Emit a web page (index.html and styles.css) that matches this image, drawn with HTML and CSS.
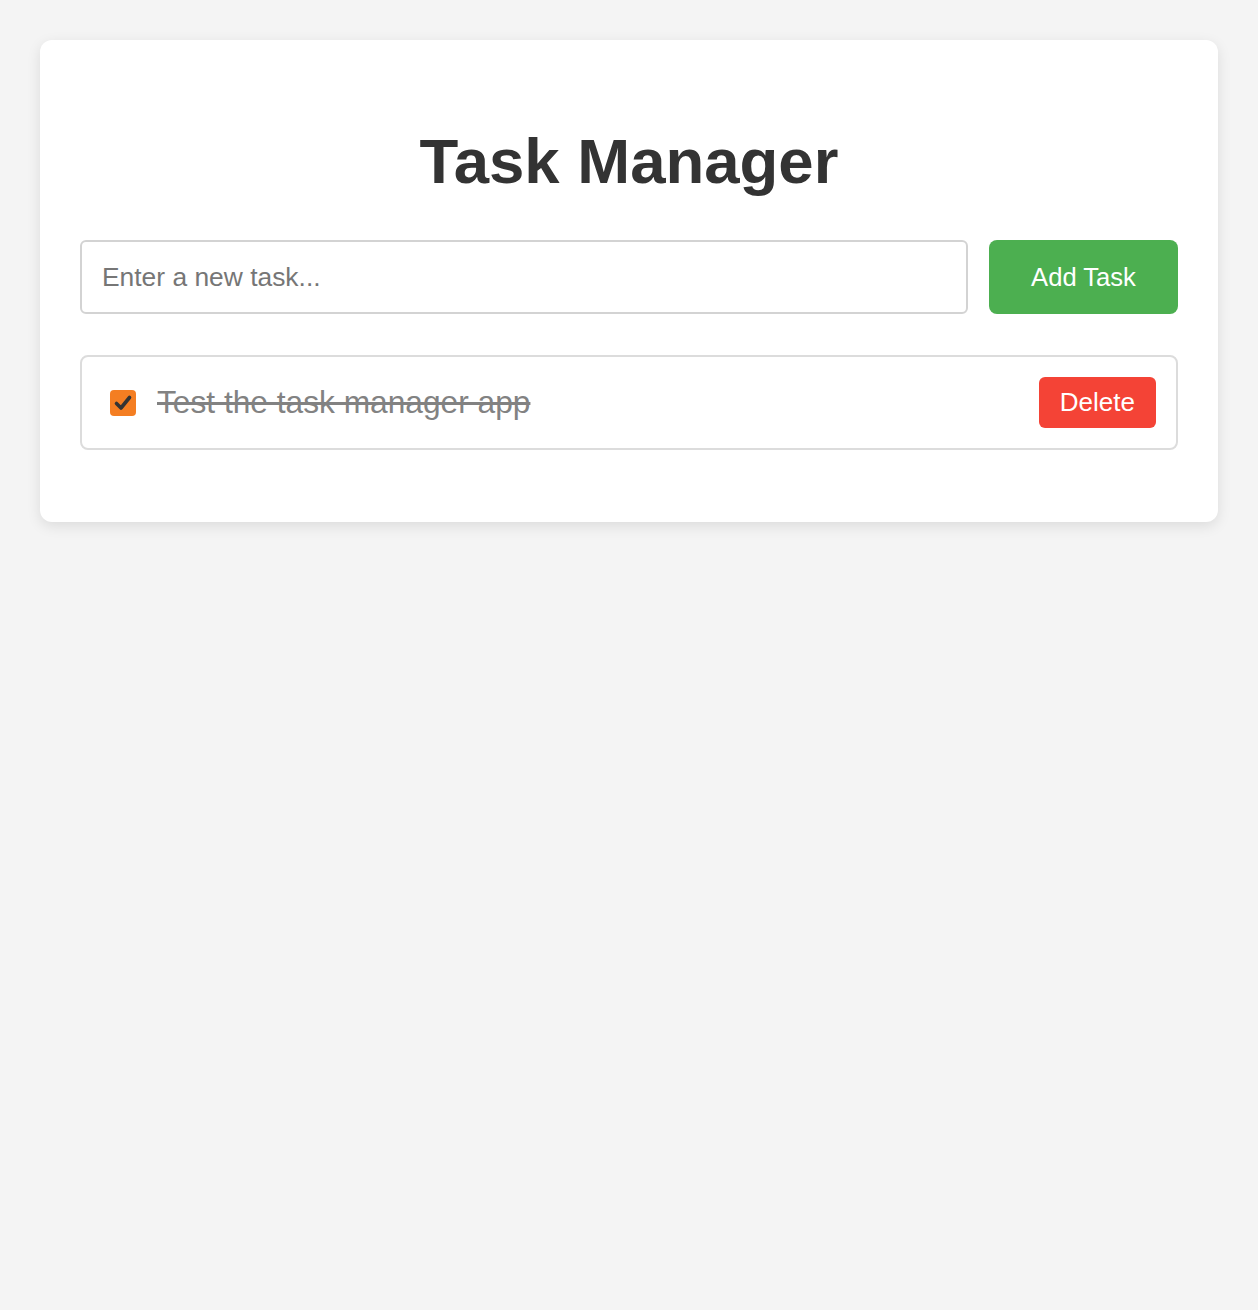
FILE: index.html
```html
<!DOCTYPE html>
<html lang="en">
<head>
<meta charset="utf-8">
<title>Task Manager</title>
<link rel="stylesheet" href="styles.css">
</head>
<body>
  <div class="card">
    <h1 class="title">Task Manager</h1>
    <div class="add-row">
      <input class="task-input" type="text" placeholder="Enter a new task...">
      <button class="add-btn">Add Task</button>
    </div>
    <ul class="task-list">
      <li class="task-item">
        <span class="check" role="checkbox" aria-checked="true">
          <svg viewBox="0 0 26 26" width="26" height="26"><path d="M6.5 13.5 L11 18 L19.5 7.5" fill="none" stroke="#333" stroke-width="3.6" stroke-linecap="round" stroke-linejoin="round"/></svg>
        </span>
        <span class="task-text done">Test the task manager app</span>
        <button class="delete-btn">Delete</button>
      </li>
    </ul>
  </div>
</body>
</html>
```
FILE: styles.css
```css
html, body {
  margin: 0;
  padding: 0;
}
body {
  background: #f4f4f4;
  padding: 40px;
  font-family: "Liberation Sans", Arial, sans-serif;
}
.card {
  background: #fff;
  border-radius: 12px;
  box-shadow: 0 4px 14px rgba(0, 0, 0, 0.1);
  padding: 40px;
}
.title {
  margin: 45px 0 42px;
  text-align: center;
  font-size: 63.5px;
  font-weight: bold;
  color: #333;
  line-height: 73px;
}
.add-row {
  display: flex;
  gap: 21px;
}
.task-input {
  flex: 1;
  min-width: 0;
  font-family: inherit;
  font-size: 26.4px;
  padding: 20px 20px;
  border: 2px solid #d3d3d3;
  border-radius: 6px;
  line-height: 30px;
  outline: none;
  color: #333;
}
.task-input::placeholder {
  color: #767676;
}
.add-btn {
  font-family: inherit;
  font-size: 25.6px;
  line-height: 30px;
  padding: 20px 0;
  width: 189px;
  text-align: center;
  background: #4caf50;
  color: #fff;
  border: none;
  border-radius: 8px;
}
.task-list {
  list-style: none;
  margin: 41px 0 32px;
  padding: 0;
}
.task-item {
  display: flex;
  align-items: center;
  border: 2px solid #dcdcdc;
  border-radius: 8px;
  padding: 20px 20px 20px 28px;
}
.check {
  width: 26px;
  height: 26px;
  border-radius: 4px;
  background: #f47e22;
  display: flex;
  align-items: center;
  justify-content: center;
  flex: none;
}
.check svg {
  display: block;
}
.task-text {
  flex: 1;
  margin-left: 21px;
  font-size: 31.7px;
  color: #828282;
}
.task-text.done {
  text-decoration: line-through;
}
.delete-btn {
  font-family: inherit;
  font-size: 26px;
  line-height: 31px;
  padding: 10px 21px;
  background: #f44336;
  color: #fff;
  border: none;
  border-radius: 6px;
}
```
